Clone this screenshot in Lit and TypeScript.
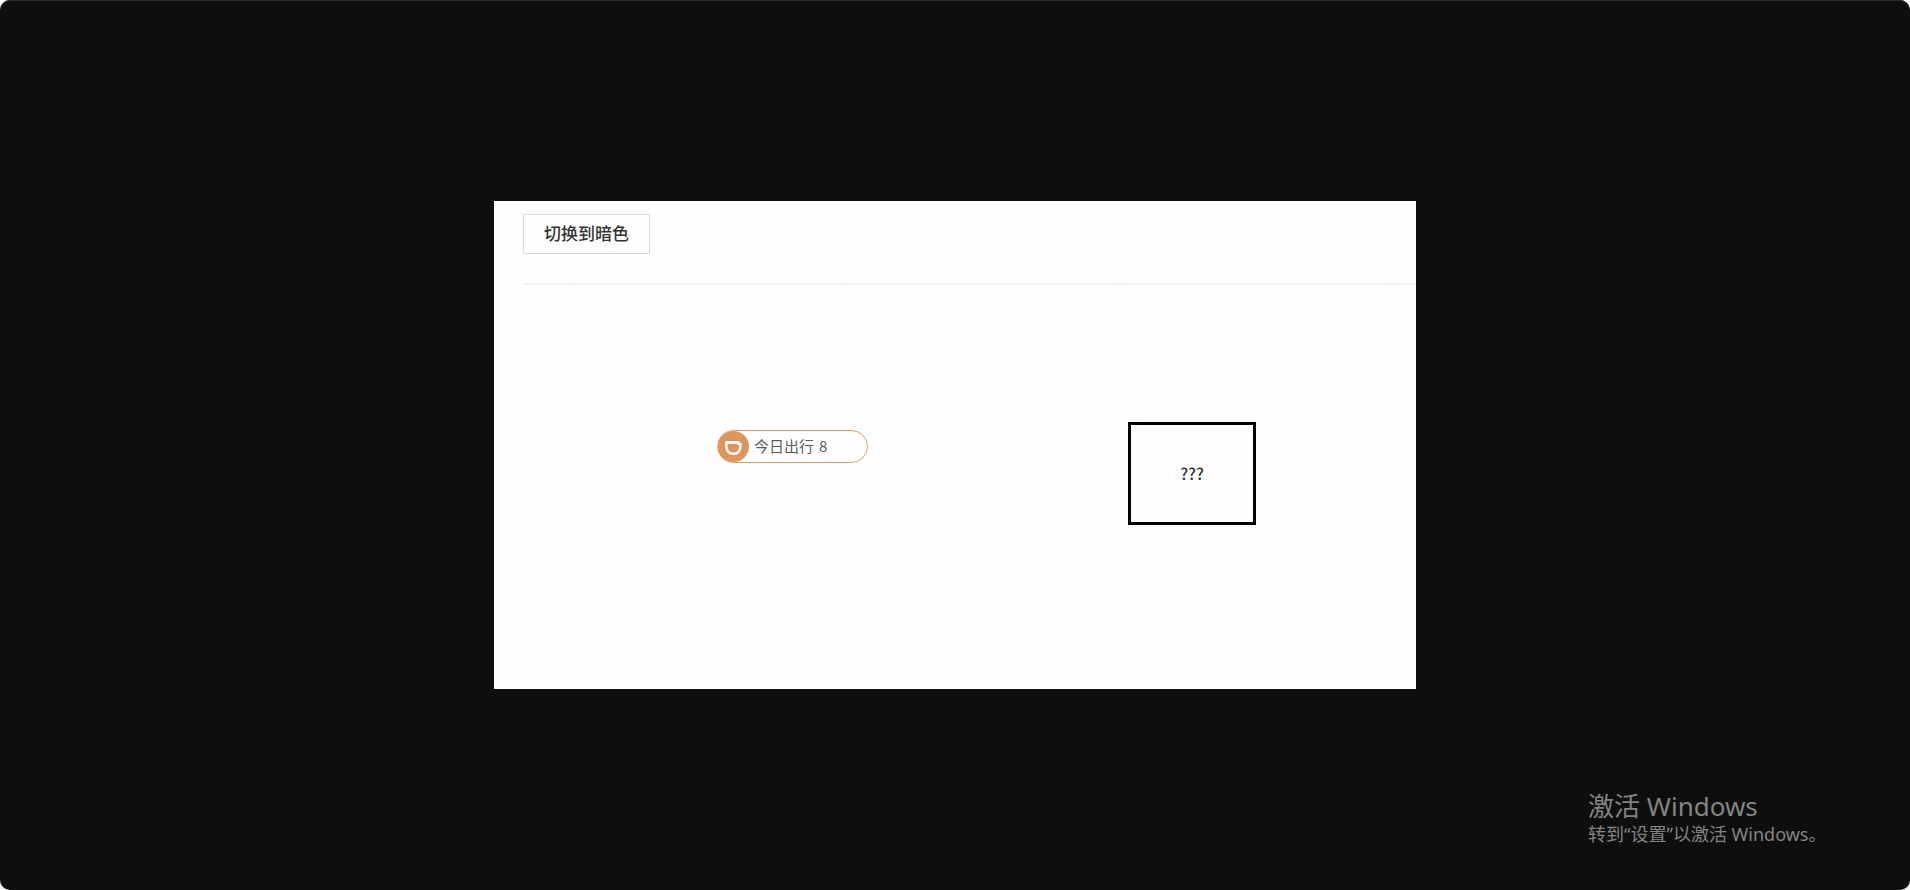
import { LitElement, html, css } from "lit";
import { customElement, property, state } from "lit/decorators.js";

@customElement("trip-pill")
export class TripPill extends LitElement {
  @property() label = "";
  @property({ type: Number }) count = 0;

  static styles = css`
    .pill {
      box-sizing: border-box;
      display: flex;
      align-items: center;
      gap: 5px;
      width: 151px;
      height: 33px;
      border: 1px solid #dc9f6c;
      border-radius: 17px;
      color: #5c5c5c;
      font-size: 15px;
      line-height: 20px;
    }
    .logo {
      flex: none;
      width: 31px;
      height: 31px;
    }
    .text {
      display: flex;
      gap: 5px;
      padding-bottom: 2px;
    }
  `;

  render() {
    return html`<div class="pill">
      <svg class="logo" viewBox="0 0 31 31" aria-hidden="true">
        <circle cx="15.5" cy="15.5" r="15.5" fill="#de965c" />
        <path
          d="M8.4 11.4H20.4V13H22.4V15.4C22.4 19.8 19.4 22.8 15.4 22.8S8.4 19.8 8.4 15.4Z"
          fill="none"
          stroke="#fff"
          stroke-width="2.6"
          stroke-linejoin="round"
        />
      </svg>
      <span class="text"><span>${this.label}</span><span>${this.count}</span></span>
    </div>`;
  }
}

@customElement("app-root")
export class AppRoot extends LitElement {
  @state() private dark = false;

  static styles = css`
    :host {
      display: block;
      background: #fff;
      font-family: "Noto Sans CJK SC", sans-serif;
    }
    .screen {
      display: grid;
      place-items: center;
      min-height: 100vh;
      box-shadow: inset 0 1px #2b2b2b;
      border-radius: 10px;
      background: #0e0e0e;
    }
    .panel {
      position: relative;
      box-sizing: border-box;
      width: 922px;
      max-width: 100%;
      padding: 13px 0 164px 29px;
      background: #fefefe;
      color: #333;
    }
    .panel.dark {
      background: #1c1c1c;
      color: #ddd;
    }
    .toolbar {
      padding-bottom: 29px;
      border-bottom: 2px solid #f3f3f3;
    }
    .switch {
      display: block;
      box-sizing: border-box;
      width: 127px;
      height: 40px;
      padding: 0 0 2px;
      border: 1px solid #d6d6d6;
      border-radius: 2px;
      background: transparent;
      color: inherit;
      font: 500 17px/24px "Noto Sans CJK SC", sans-serif;
    }
    .canvas {
      display: flex;
      align-items: flex-start;
      justify-content: space-between;
      padding: 137px 160px 0 194px;
    }
    trip-pill {
      margin-top: 8px;
    }
    .unknown {
      box-sizing: border-box;
      display: grid;
      place-items: center;
      width: 128px;
      height: 103px;
      padding-bottom: 2px;
      border: 3px solid #000;
      font-size: 16px;
      font-weight: 500;
      line-height: 24px;
    }
    .watermark {
      position: absolute;
      inset: 0;
      width: 100%;
      height: 100%;
      pointer-events: none;
      fill: #000;
      fill-opacity: 0.008;
      font-family: "Noto Sans", sans-serif;
      font-size: 19px;
    }
    .activation {
      position: absolute;
      right: 86px;
      bottom: 44px;
      width: 236px;
      color: #848484;
      font-family: "Noto Sans", "Noto Sans CJK SC", sans-serif;
      white-space: nowrap;
    }
    .activation p {
      margin: 0;
    }
    .title {
      font-size: 26px;
      line-height: 32px;
    }
    .hint {
      font-size: 18px;
      line-height: 24px;
    }
  `;

  render() {
    return html`
      <main class="screen">
        <section class="panel ${this.dark ? "dark" : ""}">
          <div class="toolbar">
            <button class="switch" @click=${() => (this.dark = !this.dark)}>
              ${this.dark ? "切换到亮色" : "切换到暗色"}
            </button>
          </div>
          <div class="canvas">
            <trip-pill label="今日出行" count="8"></trip-pill>
            <div class="unknown">???</div>
          </div>
          <svg class="watermark" aria-hidden="true">
            <pattern id="mark" width="273" height="273" patternUnits="userSpaceOnUse">
              <text transform="translate(54 118) rotate(-45)">VKMK1COQ</text>
              <text transform="translate(54 266) rotate(-45)">VKMK1COQ</text>
            </pattern>
            <rect width="100%" height="100%" fill="url(#mark)" fill-opacity="1" />
          </svg>
        </section>
      </main>
      <aside class="activation">
        <p class="title">激活 Windows</p>
        <p class="hint">转到“设置”以激活 Windows。</p>
      </aside>
    `;
  }
}
